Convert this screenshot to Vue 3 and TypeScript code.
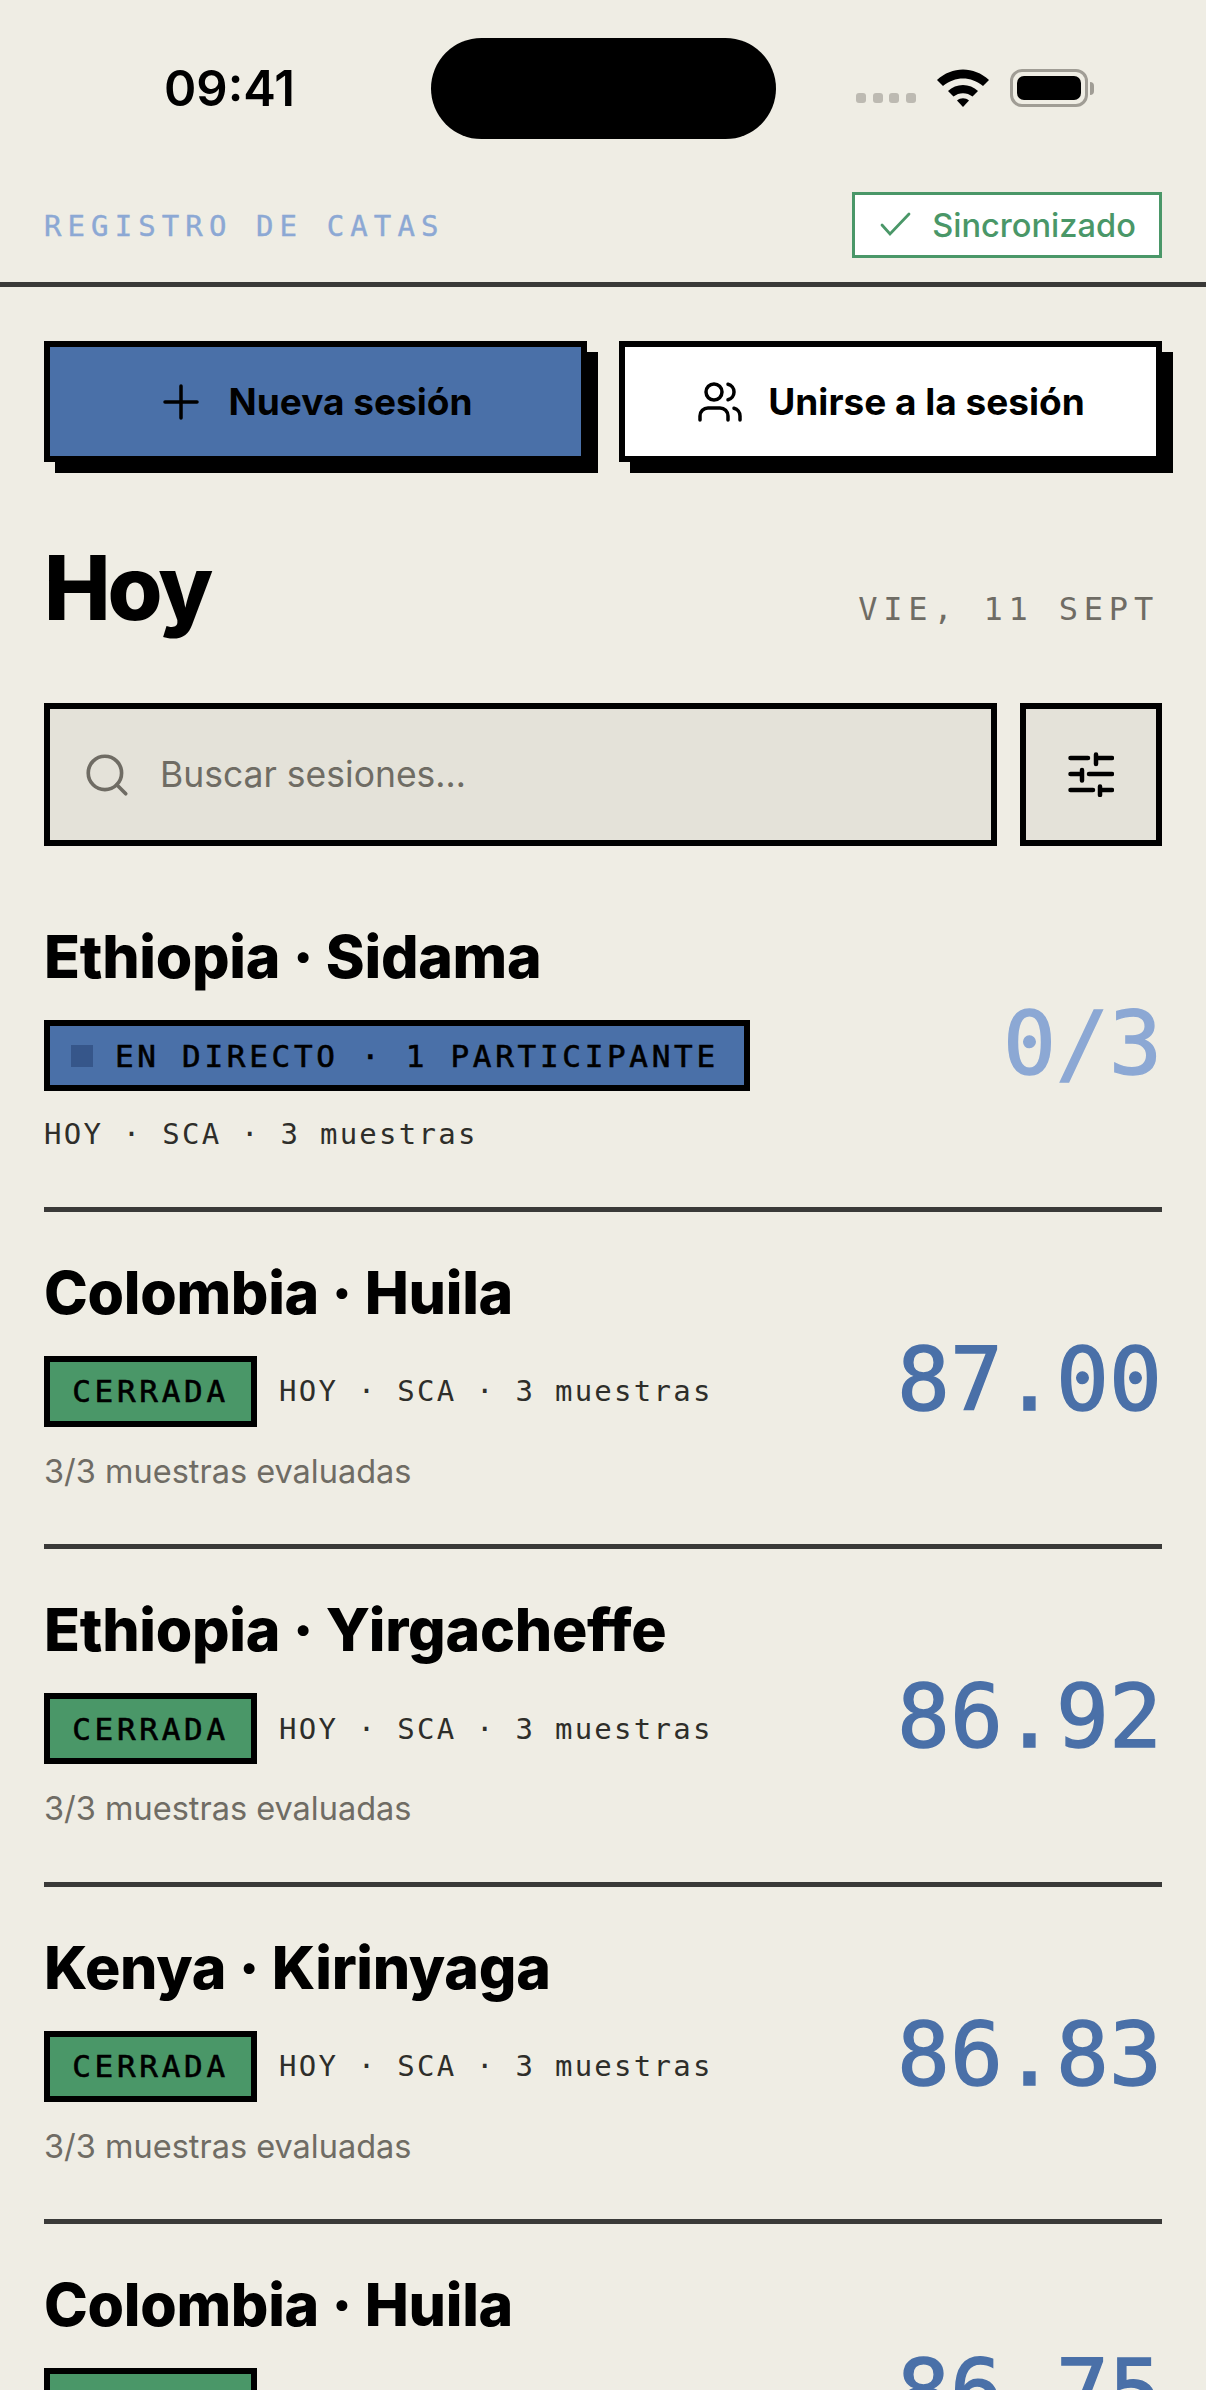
<script setup lang="ts">
interface Session {
  title: string;
  score: string;
}

const closed: Session[] = [
  { title: "Colombia · Huila", score: "87.00" },
  { title: "Ethiopia · Yirgacheffe", score: "86.92" },
  { title: "Kenya · Kirinyaga", score: "86.83" },
  { title: "Colombia · Huila", score: "86.75" },
];
</script>

<template>
  <div class="screen">
    <div class="status">
      <span class="time">09:41</span>
      <div class="island"></div>
      <div class="status-icons">
        <div class="signal"><i></i><i></i><i></i><i></i></div>
        <svg class="wifi" width="54" height="40" viewBox="0 0 54 40">
          <path d="M1 12C16-2 38-2 53 12L47 18C35 8 19 8 7 18Z" fill="#000" />
          <path d="M12 23C20 15 34 15 42 23L36.5 28.5C31 24 23 24 17.5 28.5Z" fill="#000" />
          <path d="M21 32.5C24.5 29.5 29.5 29.5 33 32.5L27 39Z" fill="#000" />
        </svg>
        <div class="battery"><div class="battery-fill"></div></div>
        <div class="battery-cap"></div>
      </div>
    </div>

    <header class="topbar">
      <span class="brand">REGISTRO DE CATAS</span>
      <div class="sync">
        <svg width="34" height="34" viewBox="0 0 34 34" fill="none" stroke="#4a9768" stroke-width="2.8" stroke-linecap="round">
          <path d="M4 17L12 26L31 6" />
        </svg>
        <span>Sincronizado</span>
      </div>
    </header>

    <main class="content">
      <div class="actions">
        <button class="btn btn-primary">
          <svg width="36" height="36" viewBox="0 0 36 36" fill="none" stroke="#000" stroke-width="3.5" stroke-linecap="round">
            <path d="M18 2V34M2 18H34" />
          </svg>
          Nueva sesión
        </button>
        <button class="btn">
          <svg width="48" height="48" viewBox="0 0 24 24" fill="none" stroke="#000" stroke-width="1.75" stroke-linecap="round" stroke-linejoin="round">
            <path d="M16 21v-2a4 4 0 0 0-4-4H6a4 4 0 0 0-4 4v2" />
            <circle cx="9" cy="7" r="4" />
            <path d="M22 21v-2a4 4 0 0 0-3-3.87" />
            <path d="M16 3.13a4 4 0 0 1 0 7.75" />
          </svg>
          Unirse a la sesión
        </button>
      </div>

      <div class="day">
        <h1>Hoy</h1>
        <span class="date">VIE, 11 SEPT</span>
      </div>

      <div class="search-row">
        <div class="search">
          <svg width="50" height="50" viewBox="0 0 24 24" fill="none" stroke="#6f6c64" stroke-width="1.75" stroke-linecap="round">
            <circle cx="11" cy="11" r="8" />
            <path d="m21 21-4.3-4.3" />
          </svg>
          <span>Buscar sesiones…</span>
        </div>
        <button class="filter">
          <svg width="46" height="45" viewBox="0 0 46 45" fill="none" stroke="#000" stroke-width="4.5" stroke-linecap="round">
            <path d="M2.5 6H20M28 2.5V12M28 6H44" />
            <path d="M2.5 22H14M14 18V28.5M21 22H44" />
            <path d="M2.5 38H25M32 34.5V43M32 38H44" />
          </svg>
        </button>
      </div>

      <div class="session-list">
        <div class="session session-live">
          <div class="session-main">
            <h2>Ethiopia · Sidama</h2>
            <div class="chip chip-live"><i class="dot"></i>EN DIRECTO · 1 PARTICIPANTE</div>
            <p class="meta meta-below">HOY · SCA · 3 muestras</p>
          </div>
          <div class="score score-pending">0/3</div>
        </div>

        <div v-for="s in closed" :key="s.score" class="session">
          <div class="session-main">
            <h2>{{ s.title }}</h2>
            <div class="chip-row">
              <div class="chip chip-closed">CERRADA</div>
              <p class="meta">HOY · SCA · 3 muestras</p>
            </div>
            <p class="progress">3/3 muestras evaluadas</p>
          </div>
          <div class="score">{{ s.score }}</div>
        </div>
      </div>
    </main>
  </div>
</template>

<style>
html,
body {
  margin: 0;
  background: #efede4;
}
</style>

<style scoped>
.screen {
  width: 1206px;
  height: 2390px;
  overflow: hidden;
  background: #efede4;
  color: #000;
  font-family: Inter, "Liberation Sans", sans-serif;
}

.status {
  height: 192px;
  position: relative;
}
.time {
  position: absolute;
  left: 164px;
  top: 60px;
  font-size: 49px;
  font-weight: 600;
  line-height: 58px;
}
.island {
  position: absolute;
  left: 431px;
  top: 38px;
  width: 345px;
  height: 101px;
  border-radius: 51px;
  background: #000;
}
.status-icons {
  position: absolute;
  left: 856px;
  top: 68px;
  display: flex;
  align-items: center;
  height: 40px;
}
.signal {
  display: flex;
  gap: 6.5px;
  margin-top: 19px;
  margin-right: 20px;
}
.signal i {
  width: 10px;
  height: 10px;
  border-radius: 3px;
  background: #bdbab2;
}
.wifi {
  margin-right: 20px;
}
.battery {
  width: 78px;
  height: 38px;
  box-sizing: border-box;
  border: 3px solid #a09d95;
  border-radius: 12px;
  padding: 4px;
}
.battery-fill {
  height: 100%;
  border-radius: 7px;
  background: #000;
}
.battery-cap {
  width: 4px;
  height: 13px;
  margin-left: 2px;
  border-radius: 0 4px 4px 0;
  background: #a09d95;
}

.topbar {
  height: 90px;
  padding: 0 44px;
  display: flex;
  align-items: flex-start;
  justify-content: space-between;
  border-bottom: 5px solid #3a3a38;
}
.brand {
  margin-top: 17px;
  font-family: "DejaVu Sans Mono", monospace;
  font-size: 29px;
  letter-spacing: 6.1px;
  color: #8ca8d4;
  -webkit-text-stroke: 0.4px currentColor;
}
.sync {
  width: 310px;
  height: 66px;
  box-sizing: border-box;
  border: 3px solid #4a9768;
  background: #fff;
  display: flex;
  align-items: center;
  justify-content: center;
  gap: 20px;
  color: #4a9768;
  font-size: 32.6px;
  font-weight: 500;
}

.content {
  padding: 0 44px;
}
.actions {
  display: flex;
  justify-content: space-between;
  margin-top: 54px;
}
.btn {
  flex: 0 0 543px;
  height: 121px;
  box-sizing: border-box;
  border: 6px solid #000;
  background: #fff;
  box-shadow: 11px 11px 0 #000;
  display: flex;
  align-items: center;
  justify-content: center;
  gap: 24px;
  font-family: inherit;
  font-size: 37px;
  font-weight: 700;
  color: #000;
  padding: 0;
}
.btn-primary {
  background: #4a70a8;
  gap: 30px;
  padding-left: 4px;
}

.day {
  display: flex;
  justify-content: space-between;
  align-items: flex-end;
  margin-top: 70px;
  padding-right: 3px;
}
h1 {
  margin: 0;
  font-size: 89px;
  font-weight: 800;
  line-height: 112px;
  letter-spacing: -3px;
}
.date {
  font-family: "DejaVu Sans Mono", monospace;
  font-size: 32px;
  letter-spacing: 5.8px;
  color: #6f6c64;
  margin-bottom: 16px;
}

.search-row {
  display: flex;
  gap: 23px;
  margin-top: 59px;
}
.search {
  flex: 1;
  height: 143px;
  box-sizing: border-box;
  border: 6px solid #000;
  background: #e4e2d9;
  display: flex;
  align-items: center;
  gap: 28px;
  padding-left: 32px;
  font-size: 35.5px;
  color: #6f6c64;
}
.filter {
  width: 142px;
  height: 143px;
  box-sizing: border-box;
  border: 6px solid #000;
  background: #e4e2d9;
  display: flex;
  align-items: center;
  justify-content: center;
  padding: 0;
}

.session-list {
  margin-top: 30px;
}
.session {
  height: 337.5px;
  box-sizing: border-box;
  padding-top: 46px;
  display: flex;
  align-items: flex-start;
  justify-content: space-between;
  border-bottom: 5px solid #3a3a38;
}
.session-live {
  height: 335.5px;
}
.session-main {
  min-width: 0;
}
h2 {
  margin: 0;
  font-size: 59px;
  font-weight: 800;
  line-height: 70px;
  letter-spacing: -0.3px;
}
.chip {
  height: 71px;
  box-sizing: border-box;
  border: 6px solid #000;
  display: inline-flex;
  align-items: center;
  font-family: "DejaVu Sans Mono", monospace;
  font-size: 31px;
  letter-spacing: 3.7px;
  -webkit-text-stroke: 0.6px currentColor;
}
.chip-live {
  width: 706px;
  padding-left: 21px;
  margin-top: 28px;
  background: #4a70a8;
  display: flex;
}
.dot {
  width: 22px;
  height: 22px;
  margin-right: 22px;
  background: #36568a;
}
.chip-closed {
  width: 213px;
  justify-content: center;
  background: #4a9768;
}
.chip-row {
  display: flex;
  align-items: center;
  gap: 22px;
  margin-top: 28px;
}
.meta {
  margin: 0;
  font-family: "DejaVu Sans Mono", monospace;
  font-size: 29px;
  letter-spacing: 2.25px;
  color: #2e2e2a;
}
.meta-below {
  margin-top: 26px;
}
.progress {
  margin: 25px 0 0;
  font-size: 32.5px;
  color: #6f6c64;
}
.score {
  margin-top: 70px;
  font-family: "DejaVu Sans Mono", monospace;
  font-size: 88px;
  line-height: 104px;
  color: #4a70a8;
  -webkit-text-stroke: 1.5px currentColor;
}
.score-pending {
  color: #8ca8d4;
}
</style>
